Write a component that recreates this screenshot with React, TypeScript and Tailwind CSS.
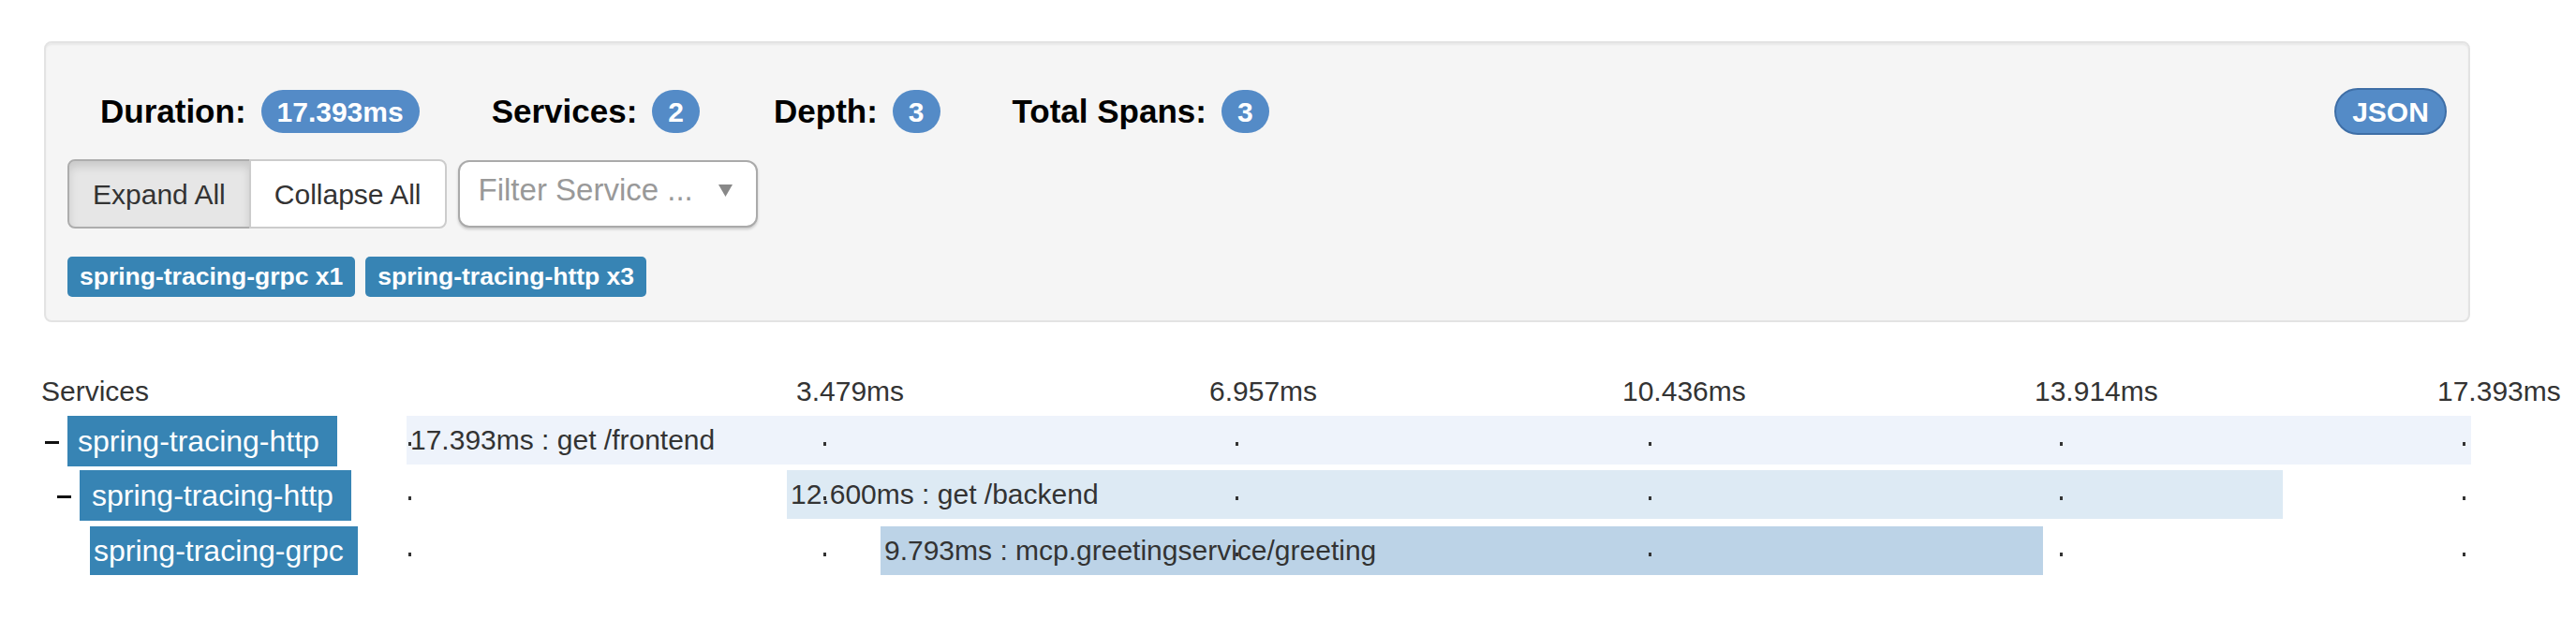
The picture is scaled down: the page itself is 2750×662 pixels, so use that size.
import React from "react";

const DURATION_MS = 17.393;
const TIMELINE_W = 2204;

type Row = {
  service: string;
  name: string;
  startMs: number;
  durationMs: number;
  leftClass: string;
  boxClass: string;
  barClass: string;
  rowClass: string;
  dash: boolean;
};

const rows: Row[] = [
  {
    service: "spring-tracing-http",
    name: "get /frontend",
    startMs: 0,
    durationMs: 17.393,
    leftClass: "pl-[48px]",
    boxClass: "w-[288px] h-[54px] pl-[11px]",
    barClass: "bg-[#eef3fb]",
    rowClass: "h-[54px]",
    dash: true,
  },
  {
    service: "spring-tracing-http",
    name: "get /backend",
    startMs: 3.204,
    durationMs: 12.6,
    leftClass: "pl-[61px]",
    boxClass: "w-[290px] h-[54px] pl-[13px]",
    barClass: "bg-[#ddeaf4]",
    rowClass: "h-[54px] mt-[4px]",
    dash: true,
  },
  {
    service: "spring-tracing-grpc",
    name: "mcp.greetingservice/greeting",
    startMs: 3.993,
    durationMs: 9.793,
    leftClass: "pl-[96px]",
    boxClass: "w-[286px] h-[52px] pl-[4px]",
    barClass: "bg-[#bcd3e7]",
    rowClass: "h-[52px] mt-[6px]",
    dash: false,
  },
];

// tick marks inside the timeline (px from its left edge)
const ticks = [2, 445, 885, 1326, 1765, 2195];

const axisLabels = [
  { label: "3.479ms", left: 416 },
  { label: "6.957ms", left: 857 },
  { label: "10.436ms", left: 1298 },
  { label: "13.914ms", left: 1738 },
  { label: "17.393ms", left: 2168 },
];

function Stat({ label, value, className }: { label: string; value: string; className?: string }) {
  return (
    <div className={`flex items-center ${className ?? ""}`}>
      <span className="text-[35px] font-bold text-black">{label}</span>
      <span className="ml-[16px] flex h-[46px] items-center rounded-full bg-[#548bc7] px-[17px] text-[30px] font-bold text-white">
        {value}
      </span>
    </div>
  );
}

function fmt(ms: number) {
  return `${ms.toFixed(3)}ms`;
}

export default function App() {
  return (
    <div className="h-[662px] w-[2750px] overflow-hidden bg-white font-['Liberation_Sans',Arial,Helvetica,sans-serif] text-[#333]">
      <div className="pt-[44px] pl-[47px]">
        <div className="h-[300px] w-[2590px] rounded-[8px] border-2 border-[#e3e3e3] bg-[#f5f5f5] px-[23px] pt-[48px] shadow-[inset_0_2px_2px_rgba(0,0,0,0.05)]">
          <div className="flex h-[50px] items-center">
            <div className="flex items-center pl-[35px]">
              <Stat label="Duration:" value="17.393ms" />
              <Stat label="Services:" value="2" className="ml-[77px]" />
              <Stat label="Depth:" value="3" className="ml-[79px]" />
              <Stat label="Total Spans:" value="3" className="ml-[77px]" />
            </div>
            <button
              type="button"
              className="ml-auto flex h-[50px] w-[120px] items-center justify-center rounded-full border-2 border-[#3e6ea6] bg-[#548bc7] text-[30px] font-bold text-white"
            >
              JSON
            </button>
          </div>

          <div className="mt-[26px] flex h-[74px] items-center">
            <div className="flex h-[74px]">
              <button
                type="button"
                className="h-full rounded-l-[8px] border-2 border-[#adadad] bg-[#e6e6e6] px-[25px] text-[30px] text-[#333] shadow-[inset_0_6px_10px_rgba(0,0,0,0.125)]"
              >
                Expand All
              </button>
              <button
                type="button"
                className="-ml-[2px] h-full rounded-r-[8px] border-2 border-[#ccc] bg-white px-[25px] text-[30px] text-[#333]"
              >
                Collapse All
              </button>
            </div>
            <div className="ml-[12px] flex h-[72px] w-[320px] items-center rounded-[12px] border-2 border-[#aaa] bg-white pr-[25px] pb-[8px] pl-[20px] shadow-[0_2px_3px_rgba(0,0,0,0.18)]">
              <span className="text-[33px] text-[#999]">Filter Service ...</span>
              <svg className="ml-auto" width="15" height="13" viewBox="0 0 15 13">
                <path d="M0 0 H15 L7.5 13 Z" fill="#888" />
              </svg>
            </div>
          </div>

          <div className="mt-[30px] flex h-[43px] gap-[11px]">
            <span className="flex h-[43px] items-center rounded-[5px] bg-[#3784b4] px-[13px] text-[26.5px] font-bold text-white">
              spring-tracing-grpc x1
            </span>
            <span className="flex h-[43px] items-center rounded-[5px] bg-[#3784b4] px-[13px] text-[26.5px] font-bold text-white">
              spring-tracing-http x3
            </span>
          </div>
        </div>
      </div>

      <div className="mt-[56px]">
        <div className="flex h-[36px] leading-[36px]">
          <div className="w-[434px] shrink-0 pl-[44px] text-[30px] text-[#333]">Services</div>
          <div className="relative w-[2204px]">
            {axisLabels.map((a) => (
              <span
                key={a.label}
                className="absolute top-0 whitespace-nowrap text-[30px] text-[#333]"
                style={{ left: a.left }}
              >
                {a.label}
              </span>
            ))}
          </div>
        </div>

        <div className="mt-[8px]">
          {rows.map((r, i) => {
            const left = (r.startMs / DURATION_MS) * TIMELINE_W;
            const width = (r.durationMs / DURATION_MS) * TIMELINE_W;
            return (
              <div key={i} className={`flex ${r.rowClass}`}>
                <div className={`flex w-[434px] shrink-0 items-start ${r.leftClass}`}>
                  {r.dash && (
                    <span className="mt-[27px] mr-[9px] h-[3px] w-[15px] shrink-0 bg-[#111]" />
                  )}
                  <div
                    className={`flex items-center bg-[#3784b4] text-[32px] whitespace-nowrap text-white ${r.boxClass}`}
                  >
                    {r.service}
                  </div>
                </div>
                <div className="relative h-[52px] w-[2204px]">
                  <div
                    className={`absolute top-0 h-[52px] ${r.barClass} pl-[4px] text-[30px] leading-[52px] whitespace-nowrap text-[#333]`}
                    style={{ left, width }}
                  >
                    {fmt(r.durationMs)} : {r.name}
                  </div>
                  {ticks.map((t) => (
                    <span
                      key={t}
                      className="absolute top-[28px] h-[4px] w-[3px] bg-[#333]"
                      style={{ left: t }}
                    />
                  ))}
                </div>
              </div>
            );
          })}
        </div>
      </div>
    </div>
  );
}
